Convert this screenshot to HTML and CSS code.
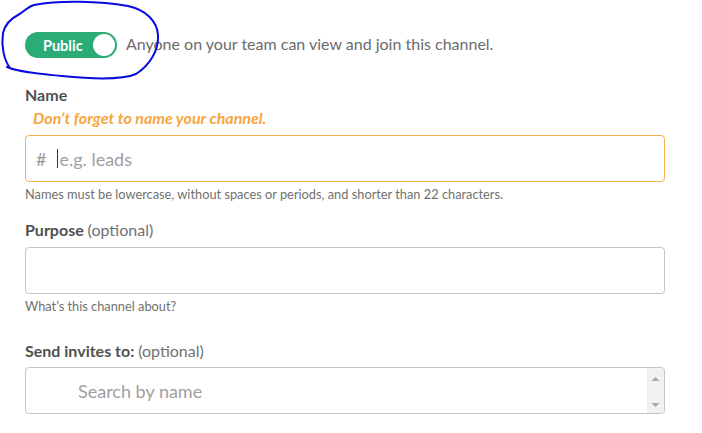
FILE: index.html
```html
<!DOCTYPE html>
<html>
<head>
<meta charset="utf-8">
<link rel="stylesheet" href="styles.css">
</head>
<body>
<div class="form">
  <div class="toggle-row">
    <div class="toggle"><span class="toggle-label">Public</span><span class="knob"></span></div>
    <span class="toggle-desc">Anyone on your team can view and join this channel.</span>
  </div>

  <div class="label label-name">Name</div>
  <div class="error">Don’t forget to name your channel.</div>
  <div class="input input-warn">
    <span class="hash">#</span><span class="caret"></span><span class="placeholder">e.g. leads</span>
  </div>
  <div class="hint">Names must be lowercase, without spaces or periods, and shorter than 22 characters.</div>

  <div class="label label-purpose">Purpose <span class="optional">(optional)</span></div>
  <div class="input input-plain"></div>
  <div class="hint">What’s this channel about?</div>

  <div class="label label-invites">Send invites to: <span class="optional">(optional)</span></div>
  <div class="input input-search">
    <span class="placeholder search-ph">Search by name</span>
    <div class="scrollbar">
      <svg width="17" height="45" viewBox="0 0 17 45"><polygon points="4.5,13 12.5,13 8.5,9" fill="#a8a8a8"/><polygon points="4.5,35 12.5,35 8.5,39" fill="#a8a8a8"/></svg>
    </div>
  </div>
</div>

<svg class="scribble" width="170" height="90" viewBox="0 0 170 90">
  <path d="M 10 68 C 4 60, 1 46, 3 33 C 5 25, 10 19, 18 15 C 24 12, 27 7, 34 5 C 60 0, 100 1, 128 6 C 146 10, 157 21, 158 35 C 159 50, 150 65, 136 74 C 122 80, 92 79, 62 76 C 42 74, 22 73, 7 67" fill="none" stroke="#0a0adf" stroke-width="2" stroke-linecap="round" stroke-linejoin="round"/>
</svg>
</body>
</html>
```
FILE: styles.css
```css
html, body {
  margin: 0;
  padding: 0;
  background: #ffffff;
}
body {
  font-family: Lato, "Open Sans", sans-serif;
  color: #505050;
  position: relative;
  width: 702px;
  height: 433px;
  overflow: hidden;
}
.form {
  padding-left: 25px;
  padding-top: 32px;
  width: 640px;
}
.toggle-row {
  display: flex;
  align-items: center;
  gap: 9px;
  height: 26px;
}
.toggle {
  width: 92px;
  height: 26px;
  border-radius: 13px;
  background: #2bac76;
  display: flex;
  align-items: center;
  justify-content: space-between;
  box-sizing: border-box;
  padding: 0 2px 0 18px;
}
.toggle-label {
  color: #fff;
  font-weight: 700;
  font-size: 14.5px;
}
.knob {
  width: 22px;
  height: 22px;
  border-radius: 50%;
  background: #fff;
}
.toggle-desc {
  font-size: 16px;
  line-height: 20px;
  margin-top: -2px;
  color: #6b6b6b;
}
.label {
  font-size: 16px;
  font-weight: 700;
  line-height: 20px;
  color: #505050;
}
.label-name { margin-top: 27px; }
.label-purpose { margin-top: 18px; }
.label-invites { margin-top: 27px; }
.optional {
  font-weight: 400;
  color: #717171;
}
.error {
  margin-top: 3px;
  margin-left: 8px;
  line-height: 20px;
  font-size: 16px;
  font-weight: 700;
  font-style: italic;
  color: #f7a53f;
}
.input {
  box-sizing: border-box;
  width: 640px;
  height: 47px;
  border: 1px solid #c5c5c5;
  border-radius: 4px;
  margin-top: 7px;
  display: flex;
  align-items: center;
  background: #fff;
}
.input-warn {
  border-color: #f7b04f;
  padding-left: 10px;
}
.input-search {
  margin-top: 6px;
  padding-left: 52px;
  position: relative;
  overflow: hidden;
}
.hash {
  font-size: 18px;
  color: #9a9a9a;
  margin-right: 11px;
}
.caret {
  width: 1px;
  height: 19px;
  background: #333;
  margin-right: 1px;
}
.placeholder {
  font-size: 18px;
  color: #a0a0a0;
}
.scrollbar {
  margin-left: auto;
  width: 17px;
  height: 45px;
  background: #f1f1f1;
  display: flex;
}
.hint {
  margin-top: 4px;
  font-size: 12.8px;
  line-height: 16px;
  color: #717171;
}
.scribble {
  position: absolute;
  left: 0;
  top: 0;
  pointer-events: none;
}
```
